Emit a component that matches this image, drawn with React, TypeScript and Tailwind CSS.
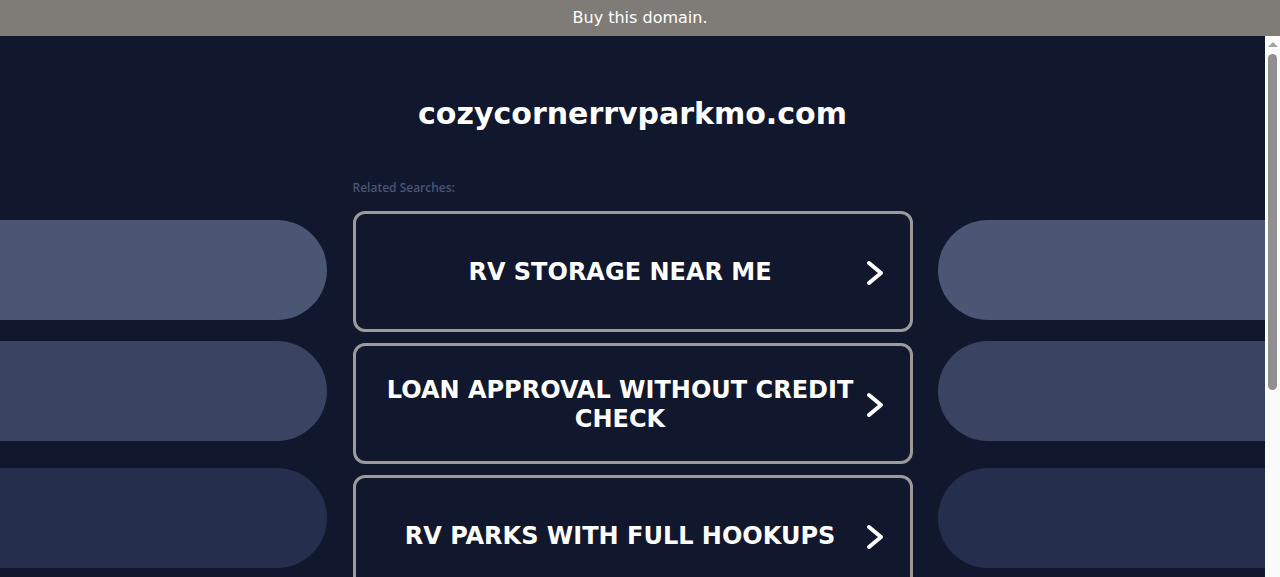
export default function App() {
  const searches = [
    "RV Storage Near Me",
    "Loan Approval Without Credit Check",
    "RV Parks With Full Hookups",
    "Campgrounds Near Me",
    "Cabin Rentals",
  ];
  const pills = ["bg-[#4b5574]", "bg-[#3a4462]", "bg-[#252e4c]"];
  const pillMargins = ["mt-[41px]", "mt-[21px]", "mt-[27px]"];

  return (
    <div className="h-screen flex flex-col overflow-hidden bg-[#11172c] font-['DejaVu_Sans',sans-serif]">
      <div className="h-9 shrink-0 bg-[#7f7b77] flex items-center justify-center text-white text-[16px]">
        Buy this domain.
      </div>

      <div className="flex-1 flex min-h-0">
        <div className="flex-1 overflow-hidden">
          <h1 className="mt-[60px] h-9 leading-9 text-center text-white font-bold text-[30px]">
            cozycornerrvparkmo.com
          </h1>

          <div className="mt-[47px] flex justify-between pb-5">
            {/* left pills */}
            <div className="w-[327px] flex flex-col">
              {pills.map((c, i) => (
                <div key={i} className={`${pillMargins[i]} h-[100px] rounded-r-[50px] ${c}`} />
              ))}
            </div>

            <div className="w-[560px] flex flex-col">
              <p className="h-4 pt-px leading-4 text-[12px] font-semibold text-[#4b5576] font-['Open_Sans',sans-serif]">
                Related Searches:
              </p>
              <div className="mt-4 flex flex-col gap-[11px]">
                {searches.map((s) => (
                  <a
                    key={s}
                    href="#"
                    className="h-[121px] shrink-0 flex items-center border-[3px] border-[#9b9b9b] rounded-[12px] pl-[30px] pr-[13px] pt-[2px] text-white"
                  >
                    <span className="flex-1 text-center uppercase font-bold text-[24px] leading-[29px]">{s}</span>
                    <span className="w-[42px] flex justify-center">
                      <svg width="22" height="26" viewBox="0 0 22 26" fill="none">
                        <path
                          d="M4 3 L16 13 L4 23"
                          stroke="white"
                          strokeWidth="4"
                          strokeLinecap="round"
                          strokeLinejoin="round"
                        />
                      </svg>
                    </span>
                  </a>
                ))}
              </div>
            </div>

            {/* right pills */}
            <div className="w-[327px] flex flex-col">
              {pills.map((c, i) => (
                <div key={i} className={`${pillMargins[i]} h-[100px] rounded-l-[50px] ${c}`} />
              ))}
            </div>
          </div>
        </div>

        {/* scrollbar */}
        <div className="w-[15px] shrink-0 bg-[#fbfbfb] flex flex-col items-center">
          <div className="mt-[6px] w-0 h-0 border-l-[5px] border-r-[5px] border-b-[5px] border-l-transparent border-r-transparent border-b-[#a3a3a3]" />
          <div className="mt-[7px] w-[9px] h-[336px] rounded-full bg-[#8f8f8f]" />
        </div>
      </div>
    </div>
  );
}
